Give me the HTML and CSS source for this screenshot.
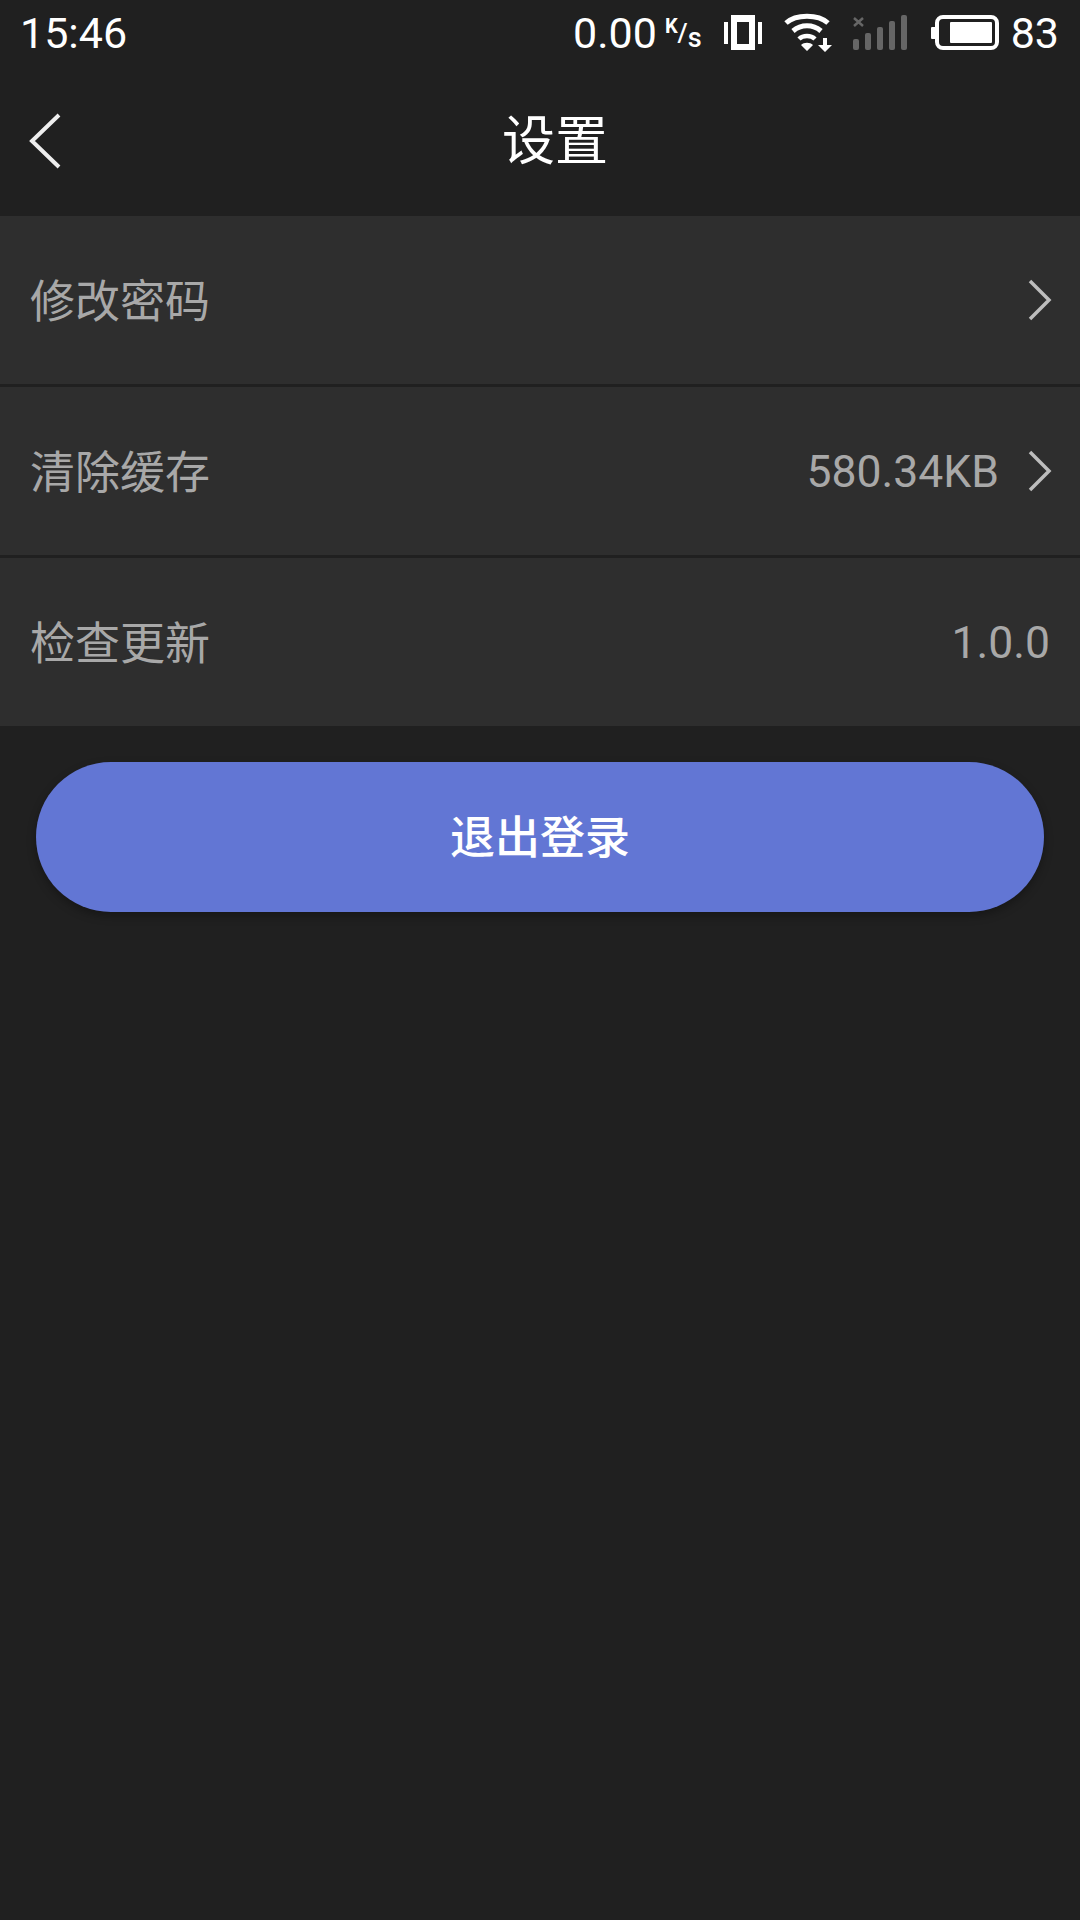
FILE: index.html
```html
<!DOCTYPE html>
<html lang="zh-CN">
<head>
    <meta charset="UTF-8">
    <title>设置</title>
    <link rel="stylesheet" href="styles.css">
</head>
<body>
    <div class="statusbar">
        <span class="clock">15:46</span>
        <div class="status-right">
            <span class="speed">0.00</span>
            <span class="speed-unit"><sup>K</sup>/<sub>s</sub></span>
            <svg class="ic-vibrate" width="38" height="36" viewBox="0 0 38 36">
                <path fill="#fff" fill-rule="evenodd" d="M7 0h24v35H7zM13 7v22h12V7z"/>
                <rect x="0" y="7" width="4" height="22" fill="#fff"/>
                <rect x="34" y="7" width="4" height="22" fill="#fff"/>
            </svg>
            <svg class="ic-wifi" width="48" height="40" viewBox="0 0 48 40">
                <path d="M2 10C12 1 34 1 44 10" fill="none" stroke="#fff" stroke-width="5"/>
                <path d="M9 18C17 11 29 11 37 18" fill="none" stroke="#fff" stroke-width="5"/>
                <path d="M15 26C19 22 27 22 31 26" fill="none" stroke="#fff" stroke-width="4.5"/>
                <path fill="#fff" d="M23 38l-6-6c3-3 9-3 12 0zM39 25h4v7h5l-7 7-7-7h5z"/>
            </svg>
            <svg class="ic-signal" width="56" height="36" viewBox="0 0 56 36">
                <path d="M2 3l9 8M11 3l-9 8" stroke="#666" stroke-width="2.5"/>
                <rect x="1" y="24" width="6" height="11" rx="2" fill="#666"/>
                <rect x="13" y="18" width="6" height="17" rx="2" fill="#666"/>
                <rect x="25" y="12" width="6" height="23" rx="2" fill="#666"/>
                <rect x="37" y="6" width="6" height="29" rx="2" fill="#666"/>
                <rect x="49" y="0" width="6" height="35" rx="2" fill="#666"/>
            </svg>
            <svg class="ic-battery" width="68" height="36" viewBox="0 0 68 36">
                <rect x="0" y="12" width="5" height="12" rx="1" fill="#fff"/>
                <rect x="6" y="2" width="60" height="31" rx="6" fill="none" stroke="#fff" stroke-width="4"/>
                <rect x="19" y="7" width="42" height="21" rx="1" fill="#fff"/>
            </svg>
            <span class="batt-num">83</span>
        </div>
    </div>

    <div class="header">
        <svg class="back" width="34" height="56" viewBox="0 0 34 56">
            <path d="M31 2L4 28l27 26" fill="none" stroke="#eeeeee" stroke-width="4"/>
        </svg>
        <h1>设置</h1>
    </div>

    <div class="list">
        <div class="row">
            <span class="row-title">修改密码</span>
            <svg class="chevron" width="24" height="42" viewBox="0 0 24 42">
                <path d="M2 2l19 19L2 40" fill="none" stroke="#bdbdbd" stroke-width="3.5"/>
            </svg>
        </div>
        <div class="row">
            <span class="row-title">清除缓存</span>
            <span class="row-value">580.34KB</span>
            <svg class="chevron" width="24" height="42" viewBox="0 0 24 42">
                <path d="M2 2l19 19L2 40" fill="none" stroke="#bdbdbd" stroke-width="3.5"/>
            </svg>
        </div>
        <div class="row">
            <span class="row-title">检查更新</span>
            <span class="row-value version">1.0.0</span>
        </div>
    </div>

    <button class="logout" type="button">退出登录</button>
</body>
</html>
```

FILE: styles.css
```css
* { box-sizing: border-box; }
html, body {
    height: 100%;
}
body {
    margin: 0;
    background-color: #202020;
    color: #fff;
    font-family: Roboto, "Noto Sans CJK SC", sans-serif;
}
.statusbar {
    height: 66px;
    display: flex;
    align-items: center;
    justify-content: space-between;
    padding: 0 21px 0 20px;
    font-size: 43px;
}
.status-right {
    display: flex;
    align-items: center;
}
.speed-unit {
    font-size: 26px;
    font-weight: 500;
    margin-left: 8px;
    line-height: 1;
}
.speed-unit sup {
    font-size: 20px;
    font-weight: 700;
    vertical-align: 9px;
    line-height: 0;
}
.speed-unit sub {
    font-size: 27px;
    vertical-align: -5px;
    line-height: 0;
}
.ic-vibrate { margin-left: 22px; }
.ic-wifi { margin-left: 22px; }
.ic-signal { margin-left: 20px; }
.ic-battery { margin-left: 23px; }
.batt-num { margin-left: 12px; }
.header {
    height: 150px;
    display: flex;
    align-items: center;
    padding-left: 28px;
}
.header h1 {
    margin: 0;
    flex: 1;
    text-align: center;
    font-size: 53px;
    font-weight: 400;
    padding: 0 32px 8px 0;
}
.row {
    height: 171px;
    background-color: #2e2e2e;
    border-bottom: 3px solid #202020;
    display: flex;
    align-items: center;
    padding: 0 28px 0 30px;
    color: #a8a8a8;
    font-size: 45px;
}
.row:last-child {
    border-bottom: none;
    height: 168px;
}
.row-title {
    flex: 1;
    padding-bottom: 3px;
}
.row-value {
    padding-top: 2px;
    font-size: 44.5px;
}
.version {
    margin-right: 2px;
}
.chevron {
    margin-left: 29px;
}
.logout {
    display: block;
    width: 1008px;
    height: 150px;
    margin: 36px 36px 0;
    padding: 0 0 6px;
    border: none;
    border-radius: 75px;
    background-color: #6276d4;
    color: #fff;
    font-family: "Noto Sans CJK SC", sans-serif;
    font-size: 45px;
    font-weight: 500;
    box-shadow: 0 4px 10px rgba(0, 0, 0, 0.3);
}
```
